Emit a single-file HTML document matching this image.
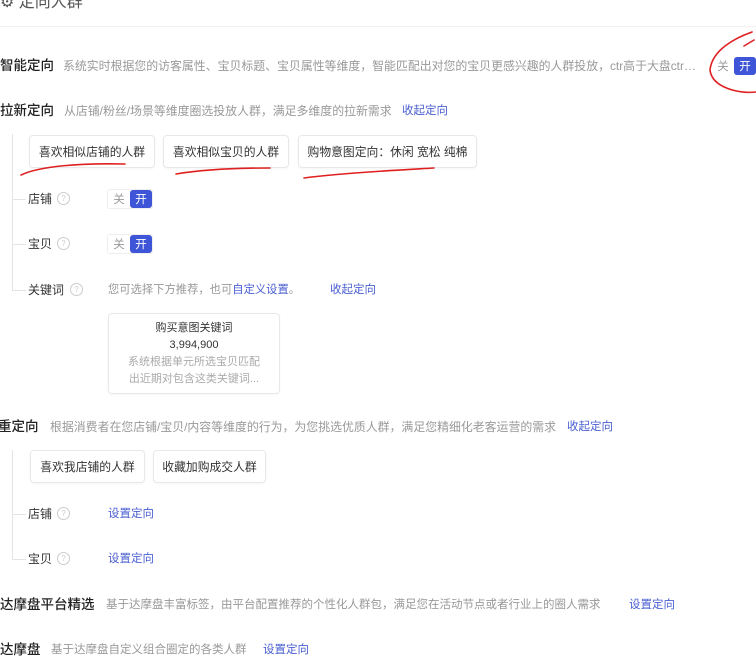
<!DOCTYPE html>
<html><head><meta charset="utf-8"><style>
body{margin:0;width:756px;height:671px;background:#fff;position:relative;overflow:hidden;font-family:"Liberation Sans","Noto Sans CJK SC",sans-serif;color:#333}
.a{position:absolute;white-space:nowrap;line-height:1}
.h{font-size:13.5px;color:#222;font-weight:500}
.d{font-size:11.9px;color:#999}
.l{font-size:11.5px;color:#4a5fd0}
.t{position:absolute;border:1px solid #e8e8e8;border-radius:4px;font-size:11.8px;color:#333;display:flex;align-items:center;justify-content:center;box-shadow:0 1px 2px rgba(0,0,0,.04)}
.s{font-size:12px;color:#333}
.q{position:absolute;width:11px;height:11px;border:1px solid #ccc;border-radius:50%;font-size:8px;color:#ccc;text-align:center;line-height:11px}
.sw{position:absolute;height:18px;display:flex;font-size:11.5px;border:1px solid #eee;border-radius:3px}
.sw span{display:flex;align-items:center;justify-content:center;width:22px}
.sw .on{background:#3d55d6;color:#fff;border-radius:3px}
.sw .off{color:#999}
.v{position:absolute;background:#e3e3e3}
</style></head><body>
<div class="a" style="left:0;top:-5px;font-size:16px;color:#555">⚙ 定向人群</div>
<div class="v" style="left:0;top:26px;width:756px;height:1px;background:#f0f0f0"></div>

<div class="a h" style="left:0;top:59px">智能定向</div>
<div class="a d" style="left:63px;top:61px">系统实时根据您的访客属性、宝贝标题、宝贝属性等维度，智能匹配出对您的宝贝更感兴趣的人群投放，ctr高于大盘ctr…</div>
<div class="sw" style="left:712px;top:57px;border:none"><span class="off">关</span><span class="on">开</span></div>

<div class="a h" style="left:0;top:104px">拉新定向</div>
<div class="a d" style="left:64px;top:106px">从店铺/粉丝/场景等维度圈选投放人群，满足多维度的拉新需求</div>
<div class="a l" style="left:402px;top:106px">收起定向</div>

<div class="v" style="left:12px;top:134px;width:1px;height:157px"></div>
<div class="t" style="left:29px;top:135px;width:124px;height:31px">喜欢相似店铺的人群</div>
<div class="t" style="left:163px;top:135px;width:124px;height:31px">喜欢相似宝贝的人群</div>
<div class="t" style="left:298px;top:135px;width:177px;height:31px">购物意图定向：休闲 宽松 纯棉</div>

<div class="v" style="left:12px;top:199px;width:14px;height:1px"></div>
<div class="a s" style="left:28px;top:193px">店铺</div><div class="q" style="left:57px;top:192px">?</div>
<div class="sw" style="left:107px;top:189px"><span class="off">关</span><span class="on">开</span></div>

<div class="v" style="left:12px;top:244px;width:14px;height:1px"></div>
<div class="a s" style="left:28px;top:238px">宝贝</div><div class="q" style="left:57px;top:237px">?</div>
<div class="sw" style="left:107px;top:234px"><span class="off">关</span><span class="on">开</span></div>

<div class="v" style="left:12px;top:290px;width:14px;height:1px"></div>
<div class="a s" style="left:28px;top:284px">关键词</div><div class="q" style="left:70px;top:283px">?</div>
<div class="a d" style="left:108px;top:285px;font-size:11.3px">您可选择下方推荐，也可<span style="color:#4a5fd0">自定义设置</span>。</div>
<div class="a l" style="left:330px;top:285px">收起定向</div>

<div class="t" style="left:108px;top:313px;width:170px;height:79px;flex-direction:column;line-height:17px;font-size:11px">
<div>购买意图关键词</div><div>3,994,900</div><div style="color:#aaa">系统根据单元所选宝贝匹配</div><div style="color:#aaa">出近期对包含这类关键词...</div></div>

<div class="a h" style="left:-2px;top:420px">重定向</div>
<div class="a d" style="left:50px;top:422px">根据消费者在您店铺/宝贝/内容等维度的行为，为您挑选优质人群，满足您精细化老客运营的需求</div>
<div class="a l" style="left:567px;top:422px">收起定向</div>

<div class="v" style="left:12px;top:450px;width:1px;height:110px"></div>
<div class="t" style="left:30px;top:450px;width:113px;height:31px">喜欢我店铺的人群</div>
<div class="t" style="left:153px;top:450px;width:111px;height:31px">收藏加购成交人群</div>

<div class="v" style="left:12px;top:514px;width:14px;height:1px"></div>
<div class="a s" style="left:28px;top:508px">店铺</div><div class="q" style="left:57px;top:507px">?</div>
<div class="a l" style="left:108px;top:509px">设置定向</div>
<div class="v" style="left:12px;top:559px;width:14px;height:1px"></div>
<div class="a s" style="left:28px;top:553px">宝贝</div><div class="q" style="left:57px;top:552px">?</div>
<div class="a l" style="left:108px;top:554px">设置定向</div>

<div class="a h" style="left:0;top:598px">达摩盘平台精选</div>
<div class="a d" style="left:106px;top:600px;font-size:11.5px">基于达摩盘丰富标签，由平台配置推荐的个性化人群包，满足您在活动节点或者行业上的圈人需求</div>
<div class="a l" style="left:629px;top:600px">设置定向</div>

<div class="a h" style="left:0;top:643px">达摩盘</div>
<div class="a d" style="left:51px;top:645px;font-size:11.5px">基于达摩盘自定义组合圈定的各类人群</div>
<div class="a l" style="left:263px;top:645px">设置定向</div>

<svg style="position:absolute;left:0;top:0" width="756" height="671" fill="none" stroke="#e02020" stroke-width="1.6" stroke-linecap="round">
<path d="M21 175 C40 166 80 163 125 164"/>
<path d="M176 174 C200 170 230 168 270 168"/>
<path d="M304 178 C340 173 400 170 434 168"/>
<path d="M752 32 C735 38 712 50 710 70 C712 88 740 94 756 92"/>
<path d="M744 46 L754 40"/>
</svg>
</body></html>
